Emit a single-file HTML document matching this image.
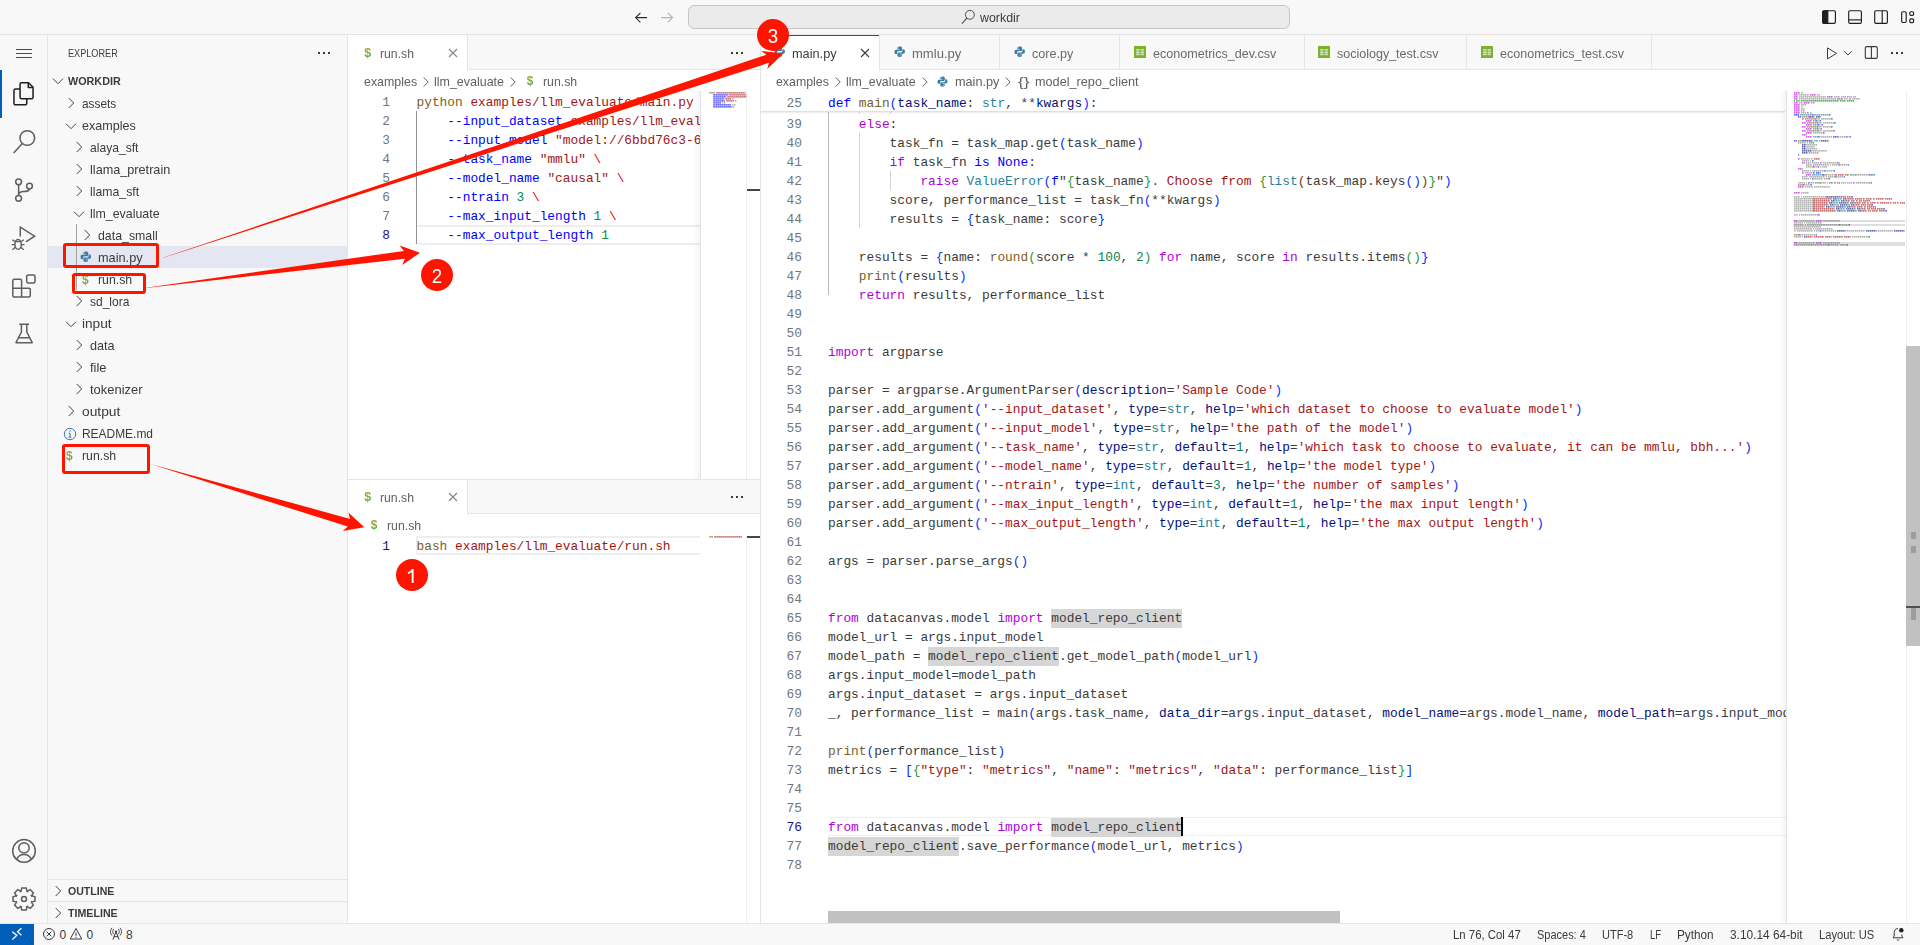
<!DOCTYPE html>
<html><head><meta charset="utf-8"><title>workdir</title>
<style>
*{box-sizing:border-box;margin:0;padding:0}
html,body{width:1920px;height:945px;overflow:hidden;background:#fff}
body{font-family:"Liberation Sans",sans-serif;font-size:13px;color:#3b3b3b;position:relative}
.abs{position:absolute}
#titlebar{left:0;top:0;width:1920px;height:35px;background:#f8f8f8;border-bottom:1px solid #e5e5e5}
#cmd{left:688px;top:5px;width:602px;height:24px;background:#ebebeb;border:1px solid #c6c6c6;border-radius:6px}
#activity{left:0;top:35px;width:48px;height:888px;background:#f8f8f8;border-right:1px solid #e5e5e5}
#sidebar{left:48px;top:35px;width:300px;height:888px;background:#f8f8f8;border-right:1px solid #e5e5e5}
#status{left:0;top:923px;width:1920px;height:22px;background:#f8f8f8;border-top:1px solid #e5e5e5;font-size:12px;color:#3b3b3b}
.row{position:absolute;left:48px;width:299px;height:22px;line-height:22px;font-size:13px;color:#3b3b3b;white-space:pre}
.row span.t{position:absolute;top:0}
.tabbar{position:absolute;background:#f8f8f8;border-bottom:1px solid #e5e5e5;height:35px}
.tab{position:absolute;top:0;height:35px;border-right:1px solid #e5e5e5;font-size:13px;line-height:35px;color:#3b3b3b;white-space:pre}
.tab.act{background:#fff;height:36px}
.bc{position:absolute;font-size:13px;color:#616161;height:22px;line-height:22px;white-space:pre}
.code{position:absolute;font-family:"Liberation Mono",monospace;font-size:12.83px;line-height:19px;height:19px;white-space:pre;color:#3b3b3b}
.ln{position:absolute;font-family:"Liberation Mono",monospace;font-size:12.83px;line-height:19px;height:19px;text-align:right;color:#6e7681;white-space:pre}
.ln.a{color:#171184}
.k{color:#af00db}.b{color:#0000ff}.f{color:#795e26}.v{color:#001080}.t{color:#267f99}.s{color:#a31515}.n{color:#098658}
.b1{color:#0431fa}.b2{color:#319331}.b3{color:#7b3814}.e{color:#ee0000}
.hl{background:#d6d6d6;padding:2.3px 0 2.2px 0}
svg{position:absolute;overflow:visible}
.sb{position:absolute;top:0;height:22px;line-height:21px;white-space:pre}

</style></head>
<body>
<div id="titlebar" class="abs"></div>
<div id="cmd" class="abs"></div>
<div class="abs" style="left:980px;top:6.6px;height:22px;line-height:22px;font-size:12px;color:#3b3b3b;white-space:pre;transform:scaleX(1.0313);transform-origin:0 50%;">workdir</div>
<svg style="left:960px;top:8px" width="16" height="18" viewBox="960 8 16 18"><circle cx="969.900" cy="14.800" r="4.450" fill="none" stroke="#4f4f4f" stroke-width="1"/><path d="M966.900 18.200L961.900 23.700" stroke="#4f4f4f" stroke-width="1.1" fill="none"/></svg>
<svg style="left:633px;top:10px" width="16" height="16" viewBox="0 0 16 16"><path d="M14 7.600H2.600M7.400 2.800L2.600 7.600L7.400 12.400" stroke="#2b2b2b" stroke-width="1.1" fill="none"/></svg>
<svg style="left:659px;top:10px" width="16" height="16" viewBox="0 0 16 16"><path d="M2 7.600H13.600M8.800 2.800L13.600 7.600L8.800 12.400" stroke="#b4b4b4" stroke-width="1.1" fill="none"/></svg>
<svg style="left:1810px;top:0" width="110" height="35" viewBox="1810 0 110 35" fill="none" stroke="#1f1f1f" stroke-width="1.15"><rect x="1822.700" y="10.700" width="12.700" height="12.700" rx="1.300"/><path d="M1822.700 12.300a1.600 1.600 0 0 1 1.600-1.600H1827.800V23.400H1824.300a1.600 1.600 0 0 1-1.600-1.600Z" fill="#1f1f1f"/><rect x="1848.700" y="10.700" width="12.700" height="12.700" rx="1.300"/><path d="M1848.700 19.900H1861.400"/><rect x="1874.700" y="10.700" width="12.700" height="12.700" rx="1.300"/><path d="M1882.200 10.700V23.400"/><rect x="1901.700" y="11.700" width="4.500" height="10.800" rx="1.200"/><rect x="1909.800" y="11.700" width="3.800" height="3.700" rx="1.100"/><rect x="1909.800" y="18.900" width="3.800" height="3.700" rx="1.100"/></svg>
<div id="activity" class="abs"></div>
<div class="abs" style="left:0;top:70px;width:2px;height:48px;background:#005fb8"></div>
<svg style="left:16px;top:45px" width="16" height="16" viewBox="0 0 16 16"><path d="M0 4.5H16M0 8.5H16M0 12.5H16" stroke="#4a4a4a" stroke-width="1"/></svg>
<svg style="left:0;top:0" width="48" height="945" viewBox="0 0 48 945" fill="none" stroke-width="1.5" stroke-linejoin="round"><g stroke="#1f1f1f"><path d="M21.500 82.750H28.600L33.050 87.200V97.250a1.500 1.500 0 0 1-1.500 1.500H21.550a1.500 1.500 0 0 1-1.500-1.500V84.250a1.500 1.500 0 0 1 1.450-1.500Z"/><path d="M28.300 83V87.500H32.900"/><path d="M20 89.050H15.450a1.500 1.500 0 0 0-1.500 1.500V103.350a1.500 1.500 0 0 0 1.500 1.500H25.250a1.500 1.500 0 0 0 1.500-1.500V98.750"/></g><g stroke="#5e5e5e"><circle cx="27.300" cy="138" r="7.350"/><path d="M22.300 143.400L13.600 153"/></g><g stroke="#5e5e5e"><circle cx="18.600" cy="181.800" r="2.900"/><circle cx="18.600" cy="198.300" r="2.900"/><circle cx="29.500" cy="186.100" r="2.900"/><path d="M18.600 184.700V195.400M29.300 189C28.800 191.600 26 191.600 23.600 191.600C21 191.600 19 192.600 18.600 195"/></g><g stroke="#5e5e5e"><path d="M20.300 236.600V227.200L34.600 236.200L25.900 241.800" stroke-linejoin="miter"/><ellipse cx="18.100" cy="244.400" rx="3.200" ry="4.900"/><path d="M15.200 241.700H21M14.900 241.600L12.300 239.700M14.800 244.600H11.700M15.100 247.600L12.400 249.800M21.300 241.600L23.900 239.700M21.400 244.600H24.500M21.100 247.600L23.800 249.800" stroke-width="1.300"/></g><g stroke="#5e5e5e"><path d="M12.800 280.800a1.500 1.500 0 0 1 1.500-1.500H20.100a1.500 1.500 0 0 1 1.500 1.500V288.200H28.800a1.500 1.500 0 0 1 1.500 1.500V295.500a1.500 1.500 0 0 1-1.500 1.500H14.300a1.500 1.500 0 0 1-1.500-1.500ZM12.800 288.200H21.600V297"/><rect x="26.700" y="275" width="8.300" height="8.100" rx="1.500"/></g><g stroke="#5e5e5e"><path d="M19.300 324.300H29M21.400 324.300V332L16 342.700H32.200L26.800 332V324.300M18.700 337.800H29.500"/></g><g stroke="#5e5e5e"><circle cx="24" cy="850.900" r="11.300"/><circle cx="24" cy="847.900" r="5.200"/><path d="M16.600 859.300C18.300 855.600 21 854.400 24 854.400S29.700 855.600 31.400 859.300"/></g><g stroke="#5e5e5e"><path d="M21.77 888.02 L26.23 888.02 L27.19 891.45 L27.08 891.40 L30.19 889.66 L33.34 892.81 L31.60 895.92 L31.55 895.81 L34.98 896.77 L34.98 901.23 L31.55 902.19 L31.60 902.08 L33.34 905.19 L30.19 908.34 L27.08 906.60 L27.19 906.55 L26.23 909.98 L21.77 909.98 L20.81 906.55 L20.92 906.60 L17.81 908.34 L14.66 905.19 L16.40 902.08 L16.45 902.19 L13.02 901.23 L13.02 896.77 L16.45 895.81 L16.40 895.92 L14.66 892.81 L17.81 889.66 L20.92 891.40 L20.81 891.45Z" stroke-linejoin="miter"/><circle cx="24" cy="899" r="2.500"/></g></svg>
<div id="sidebar" class="abs"></div>
<div class="abs" style="left:68.2px;top:42.4px;height:22px;line-height:22px;font-size:11px;color:#3b3b3b;white-space:pre;transform:scaleX(0.8309);transform-origin:0 50%;">EXPLORER</div>
<svg style="left:316px;top:51px" width="16" height="4" viewBox="0 0 16 4"><rect x="2" y="1" width="2" height="2" fill="#3b3b3b"/><rect x="7" y="1" width="2" height="2" fill="#3b3b3b"/><rect x="12" y="1" width="2" height="2" fill="#3b3b3b"/></svg>
<svg style="left:49.8px;top:73.3px" width="16" height="16" viewBox="0 0 16 16"><path d="M3 5.7L8 10.7L13 5.7" fill="none" stroke="#444" stroke-width="1"/></svg>
<div class="abs" style="left:68px;top:70.3px;height:22px;line-height:22px;font-size:11px;color:#3b3b3b;white-space:pre;font-weight:bold;transform:scaleX(0.9805);transform-origin:0 50%;">WORKDIR</div>
<div class="abs" style="left:48px;top:246px;width:299px;height:22px;background:#e4e6f1"></div>
<div class="abs" style="left:76px;top:224px;width:1px;height:66px;background:#a3a3a3"></div>
<svg style="left:63px;top:95.1px" width="16" height="16" viewBox="0 0 16 16"><path d="M5.7 3L10.7 8L5.7 13" fill="none" stroke="#444" stroke-width="1"/></svg>
<div class="abs" style="left:82.2px;top:93px;height:22px;line-height:22px;font-size:13px;color:#3b3b3b;white-space:pre;transform:scaleX(0.9101);transform-origin:0 50%;">assets</div>
<svg style="left:63px;top:117.5px" width="16" height="16" viewBox="0 0 16 16"><path d="M3 5.7L8 10.7L13 5.7" fill="none" stroke="#444" stroke-width="1"/></svg>
<div class="abs" style="left:82.2px;top:115px;height:22px;line-height:22px;font-size:13px;color:#3b3b3b;white-space:pre;transform:scaleX(0.9649);transform-origin:0 50%;">examples</div>
<svg style="left:71px;top:139.1px" width="16" height="16" viewBox="0 0 16 16"><path d="M5.7 3L10.7 8L5.7 13" fill="none" stroke="#444" stroke-width="1"/></svg>
<div class="abs" style="left:90.2px;top:137px;height:22px;line-height:22px;font-size:13px;color:#3b3b3b;white-space:pre;transform:scaleX(0.9319);transform-origin:0 50%;">alaya_sft</div>
<svg style="left:71px;top:161.1px" width="16" height="16" viewBox="0 0 16 16"><path d="M5.7 3L10.7 8L5.7 13" fill="none" stroke="#444" stroke-width="1"/></svg>
<div class="abs" style="left:90.2px;top:159px;height:22px;line-height:22px;font-size:13px;color:#3b3b3b;white-space:pre;transform:scaleX(0.9744);transform-origin:0 50%;">llama_pretrain</div>
<svg style="left:71px;top:183.1px" width="16" height="16" viewBox="0 0 16 16"><path d="M5.7 3L10.7 8L5.7 13" fill="none" stroke="#444" stroke-width="1"/></svg>
<div class="abs" style="left:90.2px;top:181px;height:22px;line-height:22px;font-size:13px;color:#3b3b3b;white-space:pre;transform:scaleX(0.9437);transform-origin:0 50%;">llama_sft</div>
<svg style="left:71px;top:205.5px" width="16" height="16" viewBox="0 0 16 16"><path d="M3 5.7L8 10.7L13 5.7" fill="none" stroke="#444" stroke-width="1"/></svg>
<div class="abs" style="left:90.2px;top:203px;height:22px;line-height:22px;font-size:13px;color:#3b3b3b;white-space:pre;transform:scaleX(0.9532);transform-origin:0 50%;">llm_evaluate</div>
<svg style="left:79px;top:227.1px" width="16" height="16" viewBox="0 0 16 16"><path d="M5.7 3L10.7 8L5.7 13" fill="none" stroke="#444" stroke-width="1"/></svg>
<div class="abs" style="left:98.2px;top:225px;height:22px;line-height:22px;font-size:13px;color:#3b3b3b;white-space:pre;transform:scaleX(0.9493);transform-origin:0 50%;">data_small</div>
<svg style="left:80.4px;top:251.2px" width="11.62" height="11.62" viewBox="0 0 14 14"><path d="M6.9 0.6C4.6 0.6 4.2 1.6 4.2 2.4V4H7.1V4.6H2.6C1.5 4.600 0.600 5.400 0.600 7.200S1.500 9.900 2.500 9.900H3.700V8.100C3.700 7 4.600 6.200 5.600 6.200H8.400C9.300 6.200 9.900 5.500 9.900 4.700V2.400C9.900 1.400 9 0.600 6.900 0.600Z" fill="#3a7ca3"/><path d="M7.1 13.4C9.400 13.400 9.800 12.400 9.800 11.600V10H6.900V9.400H11.400C12.500 9.400 13.400 8.600 13.400 6.800S12.500 4.100 11.500 4.100H10.300V5.900C10.300 7 9.400 7.800 8.400 7.800H5.600C4.700 7.800 4.100 8.500 4.100 9.300V11.600C4.100 12.600 5 13.400 7.100 13.400Z" fill="#3f82a8"/><circle cx="5.600" cy="2.300" r="0.550" fill="#fff"/><circle cx="8.400" cy="11.700" r="0.550" fill="#fff"/></svg>
<div class="abs" style="left:98.2px;top:247px;height:22px;line-height:22px;font-size:13px;color:#3b3b3b;white-space:pre;transform:scaleX(0.9795);transform-origin:0 50%;">main.py</div>
<div class="abs" style="left:82.1px;top:268.6px;font-size:12px;line-height:22px;height:22px;color:#8aa93c;font-weight:bold;background:linear-gradient(#b0a22e 28%,#55ab58 72%);-webkit-background-clip:text;background-clip:text;-webkit-text-fill-color:transparent">$</div>
<div class="abs" style="left:98.2px;top:269px;height:22px;line-height:22px;font-size:13px;color:#3b3b3b;white-space:pre;transform:scaleX(0.9463);transform-origin:0 50%;">run.sh</div>
<svg style="left:71px;top:293.1px" width="16" height="16" viewBox="0 0 16 16"><path d="M5.7 3L10.7 8L5.7 13" fill="none" stroke="#444" stroke-width="1"/></svg>
<div class="abs" style="left:90.2px;top:291px;height:22px;line-height:22px;font-size:13px;color:#3b3b3b;white-space:pre;transform:scaleX(0.9237);transform-origin:0 50%;">sd_lora</div>
<svg style="left:63px;top:315.5px" width="16" height="16" viewBox="0 0 16 16"><path d="M3 5.7L8 10.7L13 5.7" fill="none" stroke="#444" stroke-width="1"/></svg>
<div class="abs" style="left:82.2px;top:313px;height:22px;line-height:22px;font-size:13px;color:#3b3b3b;white-space:pre;transform:scaleX(1.0495);transform-origin:0 50%;">input</div>
<svg style="left:71px;top:337.1px" width="16" height="16" viewBox="0 0 16 16"><path d="M5.7 3L10.7 8L5.7 13" fill="none" stroke="#444" stroke-width="1"/></svg>
<div class="abs" style="left:90.2px;top:335px;height:22px;line-height:22px;font-size:13px;color:#3b3b3b;white-space:pre;transform:scaleX(0.9719);transform-origin:0 50%;">data</div>
<svg style="left:71px;top:359.1px" width="16" height="16" viewBox="0 0 16 16"><path d="M5.7 3L10.7 8L5.7 13" fill="none" stroke="#444" stroke-width="1"/></svg>
<div class="abs" style="left:90.2px;top:357px;height:22px;line-height:22px;font-size:13px;color:#3b3b3b;white-space:pre;transform:scaleX(0.9925);transform-origin:0 50%;">file</div>
<svg style="left:71px;top:381.1px" width="16" height="16" viewBox="0 0 16 16"><path d="M5.7 3L10.7 8L5.7 13" fill="none" stroke="#444" stroke-width="1"/></svg>
<div class="abs" style="left:90.2px;top:379px;height:22px;line-height:22px;font-size:13px;color:#3b3b3b;white-space:pre;transform:scaleX(0.9950);transform-origin:0 50%;">tokenizer</div>
<svg style="left:63px;top:403.1px" width="16" height="16" viewBox="0 0 16 16"><path d="M5.7 3L10.7 8L5.7 13" fill="none" stroke="#444" stroke-width="1"/></svg>
<div class="abs" style="left:82.2px;top:401px;height:22px;line-height:22px;font-size:13px;color:#3b3b3b;white-space:pre;transform:scaleX(1.0593);transform-origin:0 50%;">output</div>
<svg style="left:63px;top:426.5px" width="14" height="14" viewBox="0 0 14 14"><circle cx="7" cy="7" r="5.700" fill="none" stroke="#4178ac" stroke-width="1"/><path d="M7 6.200V10.200M5.800 6.200H7M5.600 10.200H8.400M7 3.600V4.800" stroke="#4178ac" stroke-width="1.1" fill="none"/></svg>
<div class="abs" style="left:82.2px;top:423px;height:22px;line-height:22px;font-size:13px;color:#3b3b3b;white-space:pre;transform:scaleX(0.9185);transform-origin:0 50%;">README.md</div>
<div class="abs" style="left:66.1px;top:444.6px;font-size:12px;line-height:22px;height:22px;color:#8aa93c;font-weight:bold;background:linear-gradient(#b0a22e 28%,#55ab58 72%);-webkit-background-clip:text;background-clip:text;-webkit-text-fill-color:transparent">$</div>
<div class="abs" style="left:82.2px;top:445px;height:22px;line-height:22px;font-size:13px;color:#3b3b3b;white-space:pre;transform:scaleX(0.9435);transform-origin:0 50%;">run.sh</div>
<div class="abs" style="left:48px;top:879px;width:299px;height:1px;background:#e5e5e5"></div>
<div class="abs" style="left:48px;top:901px;width:299px;height:1px;background:#e5e5e5"></div>
<svg style="left:50px;top:883px" width="16" height="16" viewBox="0 0 16 16"><path d="M5.7 3L10.7 8L5.7 13" fill="none" stroke="#444" stroke-width="1"/></svg>
<div class="abs" style="left:68px;top:880.4px;height:22px;line-height:22px;font-size:11px;color:#3b3b3b;white-space:pre;font-weight:bold;transform:scaleX(0.9590);transform-origin:0 50%;">OUTLINE</div>
<svg style="left:50px;top:905px" width="16" height="16" viewBox="0 0 16 16"><path d="M5.7 3L10.7 8L5.7 13" fill="none" stroke="#444" stroke-width="1"/></svg>
<div class="abs" style="left:68px;top:902.4px;height:22px;line-height:22px;font-size:11px;color:#3b3b3b;white-space:pre;font-weight:bold;transform:scaleX(0.9680);transform-origin:0 50%;">TIMELINE</div>
<div class="tabbar" style="left:348px;top:35px;width:412px"></div>
<div class="tab act" style="left:348px;top:35px;width:120px"></div>
<div class="abs" style="left:364.3px;top:42.3px;font-size:12.5px;line-height:22px;height:22px;color:#8aa93c;font-weight:bold;background:linear-gradient(#b0a22e 28%,#55ab58 72%);-webkit-background-clip:text;background-clip:text;-webkit-text-fill-color:transparent">$</div>
<div class="abs" style="left:380.3px;top:36px;height:35px;line-height:35px;font-size:13px;color:#5f5f5f;white-space:pre;transform:scaleX(0.9408);transform-origin:0 50%;">run.sh</div>
<svg style="left:445px;top:45px" width="16" height="16" viewBox="0 0 16 16"><path d="M4 4L12 12M12 4L4 12" stroke="#858585" stroke-width="1.1" fill="none"/></svg>
<svg style="left:729px;top:51px" width="16" height="4" viewBox="0 0 16 4"><rect x="2" y="1" width="2" height="2" fill="#3b3b3b"/><rect x="7" y="1" width="2" height="2" fill="#3b3b3b"/><rect x="12" y="1" width="2" height="2" fill="#3b3b3b"/></svg>
<div class="abs" style="left:364px;top:71px;height:22px;line-height:22px;font-size:13px;color:#616161;white-space:pre;transform:scaleX(0.9541);transform-origin:0 50%;">examples</div>
<svg style="left:418.4px;top:73.5px" width="16" height="16" viewBox="0 0 16 16"><path d="M5.7 3.500L10.200 8L5.700 12.500" fill="none" stroke="#616161" stroke-width="1"/></svg>
<div class="abs" style="left:434.2px;top:71px;height:22px;line-height:22px;font-size:13px;color:#616161;white-space:pre;transform:scaleX(0.9587);transform-origin:0 50%;">llm_evaluate</div>
<svg style="left:505px;top:73.5px" width="16" height="16" viewBox="0 0 16 16"><path d="M5.7 3.500L10.200 8L5.700 12.500" fill="none" stroke="#616161" stroke-width="1"/></svg>
<div class="abs" style="left:526.8px;top:70.3px;font-size:12px;line-height:22px;height:22px;color:#8aa93c;font-weight:bold;background:linear-gradient(#b0a22e 28%,#55ab58 72%);-webkit-background-clip:text;background-clip:text;-webkit-text-fill-color:transparent">$</div>
<div class="abs" style="left:542.8px;top:71px;height:22px;line-height:22px;font-size:13px;color:#616161;white-space:pre;transform:scaleX(0.9435);transform-origin:0 50%;">run.sh</div>
<div class="abs" style="left:417px;top:225px;width:283px;height:20px;border:2px solid #eeeeee;border-right:none;border-left:none"></div>
<div class="abs" style="left:416px;top:111px;width:1px;height:133px;background:#939393"></div>
<div class="abs" style="left:348px;top:91px;width:352px;height:389px;overflow:hidden">
<div class="code" style="left:68.5px;top:2px;"><span class="f">python</span> <span class="s">examples/llm_evaluate/main.py</span> <span class="e">\</span></div>
<div class="ln" style="left:2px;top:2px;width:40px">1</div>
<div class="code" style="left:68.5px;top:21px;">    <span class="b">--input_dataset</span> <span class="s">examples/llm_evaluate/data_small</span> <span class="e">\</span></div>
<div class="ln" style="left:2px;top:21px;width:40px">2</div>
<div class="code" style="left:68.5px;top:40px;">    <span class="b">--input_model</span> <span class="s">"model://6bbd76c3-6d2e-4f7a-9c1b"</span> <span class="e">\</span></div>
<div class="ln" style="left:2px;top:40px;width:40px">3</div>
<div class="code" style="left:68.5px;top:59px;">    <span class="b">--task_name</span> <span class="s">"mmlu"</span> <span class="e">\</span></div>
<div class="ln" style="left:2px;top:59px;width:40px">4</div>
<div class="code" style="left:68.5px;top:78px;">    <span class="b">--model_name</span> <span class="s">"causal"</span> <span class="e">\</span></div>
<div class="ln" style="left:2px;top:78px;width:40px">5</div>
<div class="code" style="left:68.5px;top:97px;">    <span class="b">--ntrain</span> <span class="n">3</span> <span class="e">\</span></div>
<div class="ln" style="left:2px;top:97px;width:40px">6</div>
<div class="code" style="left:68.5px;top:116px;">    <span class="b">--max_input_length</span> <span class="n">1</span> <span class="e">\</span></div>
<div class="ln" style="left:2px;top:116px;width:40px">7</div>
<div class="code" style="left:68.5px;top:135px;">    <span class="b">--max_output_length</span> <span class="n">1</span></div>
<div class="ln a" style="left:2px;top:135px;width:40px">8</div>
</div>
<div class="abs" style="left:693px;top:91px;width:7px;height:388px;background:linear-gradient(to right,rgba(0,0,0,0),rgba(0,0,0,0.045))"></div><div class="abs" style="left:700px;top:91px;width:1px;height:388px;background:#e2e2e2"></div>
<div class="abs" style="left:746px;top:91px;width:1px;height:388px;background:#ededed"></div>
<div class="abs" style="left:747px;top:189px;width:13px;height:2px;background:#454545"></div>
<svg style="left:0;top:0" width="1920" height="945" viewBox="0 0 1920 945"><path d="M709.3 92.9h6.0" stroke="#795e26" stroke-width="1.15" opacity="0.8" fill="none" stroke-dasharray="1.6 0.4"/><path d="M716.3 92.9h29.0M729.3 94.9h17.0M727.3 96.9h19.0M725.3 98.9h6.0M726.3 100.9h8.0" stroke="#a31515" stroke-width="1.15" opacity="0.8" fill="none" stroke-dasharray="1.6 0.4"/><path d="M713.3 94.9h15.0M713.3 96.9h13.0M713.3 98.9h11.0M713.3 100.9h12.0M713.3 102.9h8.0M713.3 104.9h18.0M713.3 106.9h19.0" stroke="#0000ff" stroke-width="1.15" opacity="0.8" fill="none" stroke-dasharray="1.6 0.4"/><path d="M732.3 98.9h1.0M735.3 100.9h1.0M724.3 102.9h1.0M734.3 104.9h1.0" stroke="#ee0000" stroke-width="1.15" opacity="0.8" fill="none" stroke-dasharray="1.6 0.4"/><path d="M722.3 102.9h1.0M732.3 104.9h1.0M733.3 106.9h1.0" stroke="#098658" stroke-width="1.15" opacity="0.8" fill="none" stroke-dasharray="1.6 0.4"/></svg>
<div class="abs" style="left:348px;top:479px;width:412px;height:1px;background:#e5e5e5"></div>
<div class="tabbar" style="left:348px;top:479px;width:412px;border-top:1px solid #e5e5e5"></div>
<div class="tab act" style="left:348px;top:479px;width:120px;border-top:1px solid #e5e5e5"></div>
<div class="abs" style="left:364.3px;top:486.3px;font-size:12.5px;line-height:22px;height:22px;color:#8aa93c;font-weight:bold;background:linear-gradient(#b0a22e 28%,#55ab58 72%);-webkit-background-clip:text;background-clip:text;-webkit-text-fill-color:transparent">$</div>
<div class="abs" style="left:380.3px;top:480px;height:35px;line-height:35px;font-size:13px;color:#5f5f5f;white-space:pre;transform:scaleX(0.9408);transform-origin:0 50%;">run.sh</div>
<svg style="left:445px;top:489px" width="16" height="16" viewBox="0 0 16 16"><path d="M4 4L12 12M12 4L4 12" stroke="#858585" stroke-width="1.1" fill="none"/></svg>
<svg style="left:729px;top:495px" width="16" height="4" viewBox="0 0 16 4"><rect x="2" y="1" width="2" height="2" fill="#3b3b3b"/><rect x="7" y="1" width="2" height="2" fill="#3b3b3b"/><rect x="12" y="1" width="2" height="2" fill="#3b3b3b"/></svg>
<div class="abs" style="left:370.8px;top:514.3px;font-size:12px;line-height:22px;height:22px;color:#8aa93c;font-weight:bold;background:linear-gradient(#b0a22e 28%,#55ab58 72%);-webkit-background-clip:text;background-clip:text;-webkit-text-fill-color:transparent">$</div>
<div class="abs" style="left:386.8px;top:515px;height:22px;line-height:22px;font-size:13px;color:#616161;white-space:pre;transform:scaleX(0.9435);transform-origin:0 50%;">run.sh</div>
<div class="abs" style="left:416px;top:536px;width:284px;height:19px;border:2px solid #eeeeee;border-right:none"></div>
<div class="code" style="left:416.5px;top:537px;"><span class="f">bash</span> <span class="s">examples/llm_evaluate/run.sh</span></div>
<div class="ln a" style="left:350px;top:537px;width:40px">1</div>
<div class="abs" style="left:746px;top:536px;width:1px;height:387px;background:#ededed"></div>
<div class="abs" style="left:747px;top:536px;width:13px;height:2px;background:#454545"></div>
<svg style="left:0;top:0" width="1920" height="945" viewBox="0 0 1920 945"><path d="M709.3 536.9h4.0" stroke="#795e26" stroke-width="1.15" opacity="0.8" fill="none" stroke-dasharray="1.6 0.4"/><path d="M714.3 536.9h28.0" stroke="#a31515" stroke-width="1.15" opacity="0.8" fill="none" stroke-dasharray="1.6 0.4"/></svg>
<div class="abs" style="left:760px;top:35px;width:1px;height:888px;background:#e5e5e5"></div>
<div class="tabbar" style="left:761px;top:35px;width:1159px"></div>
<div class="tab act" style="left:761px;top:35px;width:119px"></div>
<div class="abs" style="left:761px;top:35px;width:118px;height:1px;background:#005fb8"></div>
<svg style="left:774.4px;top:46.2px" width="11.48" height="11.48" viewBox="0 0 14 14"><path d="M6.9 0.6C4.6 0.6 4.2 1.6 4.2 2.4V4H7.1V4.6H2.6C1.5 4.600 0.600 5.400 0.600 7.200S1.500 9.900 2.500 9.900H3.700V8.100C3.700 7 4.600 6.200 5.600 6.200H8.400C9.300 6.200 9.900 5.500 9.900 4.700V2.400C9.900 1.400 9 0.600 6.900 0.600Z" fill="#3a7ca3"/><path d="M7.1 13.4C9.400 13.400 9.800 12.400 9.800 11.600V10H6.900V9.400H11.400C12.500 9.400 13.400 8.600 13.400 6.800S12.500 4.100 11.500 4.100H10.300V5.900C10.300 7 9.400 7.800 8.400 7.800H5.600C4.700 7.800 4.100 8.500 4.100 9.300V11.600C4.100 12.600 5 13.400 7.100 13.400Z" fill="#3f82a8"/><circle cx="5.600" cy="2.300" r="0.550" fill="#fff"/><circle cx="8.400" cy="11.700" r="0.550" fill="#fff"/></svg>
<div class="abs" style="left:792.3px;top:36px;height:35px;line-height:35px;font-size:13px;color:#3b3b3b;white-space:pre;transform:scaleX(0.9795);transform-origin:0 50%;">main.py</div>
<div class="tab" style="left:880px;top:35px;width:120px"></div>
<svg style="left:894.4px;top:46.2px" width="11.48" height="11.48" viewBox="0 0 14 14"><path d="M6.9 0.6C4.6 0.6 4.2 1.6 4.2 2.4V4H7.1V4.6H2.6C1.5 4.600 0.600 5.400 0.600 7.200S1.500 9.900 2.500 9.900H3.700V8.100C3.700 7 4.600 6.200 5.600 6.200H8.400C9.300 6.200 9.900 5.500 9.900 4.700V2.400C9.900 1.400 9 0.600 6.900 0.600Z" fill="#3a7ca3"/><path d="M7.1 13.4C9.400 13.400 9.800 12.400 9.800 11.600V10H6.900V9.400H11.400C12.500 9.400 13.400 8.600 13.400 6.800S12.500 4.100 11.500 4.100H10.300V5.900C10.300 7 9.400 7.800 8.400 7.800H5.600C4.700 7.800 4.100 8.500 4.100 9.300V11.600C4.100 12.600 5 13.400 7.100 13.400Z" fill="#3f82a8"/><circle cx="5.600" cy="2.300" r="0.550" fill="#fff"/><circle cx="8.400" cy="11.700" r="0.550" fill="#fff"/></svg>
<div class="abs" style="left:912.3px;top:36px;height:35px;line-height:35px;font-size:13px;color:#6b6b6b;white-space:pre;transform:scaleX(1.0036);transform-origin:0 50%;">mmlu.py</div>
<div class="tab" style="left:1000px;top:35px;width:120px"></div>
<svg style="left:1014.4px;top:46.2px" width="11.48" height="11.48" viewBox="0 0 14 14"><path d="M6.9 0.6C4.6 0.6 4.2 1.6 4.2 2.4V4H7.1V4.6H2.6C1.5 4.600 0.600 5.400 0.600 7.200S1.500 9.900 2.500 9.900H3.700V8.100C3.700 7 4.600 6.200 5.600 6.200H8.400C9.300 6.200 9.900 5.500 9.900 4.700V2.400C9.900 1.400 9 0.600 6.900 0.600Z" fill="#3a7ca3"/><path d="M7.1 13.4C9.400 13.400 9.800 12.400 9.800 11.600V10H6.900V9.400H11.400C12.500 9.400 13.400 8.600 13.400 6.800S12.500 4.100 11.500 4.100H10.300V5.900C10.300 7 9.400 7.800 8.400 7.800H5.600C4.700 7.800 4.100 8.500 4.100 9.300V11.600C4.100 12.600 5 13.400 7.100 13.400Z" fill="#3f82a8"/><circle cx="5.600" cy="2.300" r="0.550" fill="#fff"/><circle cx="8.400" cy="11.700" r="0.550" fill="#fff"/></svg>
<div class="abs" style="left:1032.3px;top:36px;height:35px;line-height:35px;font-size:13px;color:#6b6b6b;white-space:pre;transform:scaleX(0.9709);transform-origin:0 50%;">core.py</div>
<div class="tab" style="left:1120px;top:35px;width:185px"></div>
<svg style="left:1134px;top:46px" width="12" height="12" viewBox="0 0 12 12"><rect x="0" y="0" width="12" height="12" rx="0.5" fill="#7eb12f"/><rect x="2.2" y="3.300" width="3.300" height="5.800" fill="#a3c970"/><rect x="2.2" y="3.3" width="3.300" height="1" fill="#dcebd0"/><rect x="2.2" y="5.9" width="3.300" height="1" fill="#dcebd0"/><rect x="2.2" y="8.1" width="3.300" height="1" fill="#dcebd0"/><rect x="6.6" y="3.300" width="3.300" height="5.800" fill="#a3c970"/><rect x="6.6" y="3.3" width="3.300" height="1" fill="#dcebd0"/><rect x="6.6" y="5.9" width="3.300" height="1" fill="#dcebd0"/><rect x="6.6" y="8.1" width="3.300" height="1" fill="#dcebd0"/></svg>
<div class="abs" style="left:1152.5px;top:36px;height:35px;line-height:35px;font-size:13px;color:#6b6b6b;white-space:pre;transform:scaleX(0.9665);transform-origin:0 50%;">econometrics_dev.csv</div>
<div class="tab" style="left:1305px;top:35px;width:162px"></div>
<svg style="left:1318.3px;top:46px" width="12" height="12" viewBox="0 0 12 12"><rect x="0" y="0" width="12" height="12" rx="0.5" fill="#7eb12f"/><rect x="2.2" y="3.300" width="3.300" height="5.800" fill="#a3c970"/><rect x="2.2" y="3.3" width="3.300" height="1" fill="#dcebd0"/><rect x="2.2" y="5.9" width="3.300" height="1" fill="#dcebd0"/><rect x="2.2" y="8.1" width="3.300" height="1" fill="#dcebd0"/><rect x="6.6" y="3.300" width="3.300" height="5.800" fill="#a3c970"/><rect x="6.6" y="3.3" width="3.300" height="1" fill="#dcebd0"/><rect x="6.6" y="5.9" width="3.300" height="1" fill="#dcebd0"/><rect x="6.6" y="8.1" width="3.300" height="1" fill="#dcebd0"/></svg>
<div class="abs" style="left:1336.8px;top:36px;height:35px;line-height:35px;font-size:13px;color:#6b6b6b;white-space:pre;transform:scaleX(0.9619);transform-origin:0 50%;">sociology_test.csv</div>
<div class="tab" style="left:1467px;top:35px;width:185px"></div>
<svg style="left:1481px;top:46px" width="12" height="12" viewBox="0 0 12 12"><rect x="0" y="0" width="12" height="12" rx="0.5" fill="#7eb12f"/><rect x="2.2" y="3.300" width="3.300" height="5.800" fill="#a3c970"/><rect x="2.2" y="3.3" width="3.300" height="1" fill="#dcebd0"/><rect x="2.2" y="5.9" width="3.300" height="1" fill="#dcebd0"/><rect x="2.2" y="8.1" width="3.300" height="1" fill="#dcebd0"/><rect x="6.6" y="3.300" width="3.300" height="5.800" fill="#a3c970"/><rect x="6.6" y="3.3" width="3.300" height="1" fill="#dcebd0"/><rect x="6.6" y="5.9" width="3.300" height="1" fill="#dcebd0"/><rect x="6.6" y="8.1" width="3.300" height="1" fill="#dcebd0"/></svg>
<div class="abs" style="left:1499.5px;top:36px;height:35px;line-height:35px;font-size:13px;color:#6b6b6b;white-space:pre;transform:scaleX(0.9640);transform-origin:0 50%;">econometrics_test.csv</div>
<svg style="left:857px;top:45.4px" width="16" height="16" viewBox="0 0 16 16"><path d="M4 4L12 12M12 4L4 12" stroke="#3b3b3b" stroke-width="1.1" fill="none"/></svg>
<svg style="left:1820px;top:36px" width="100" height="34" viewBox="1820 36 100 34" fill="none" stroke="#3b3b3b" stroke-width="1"><path d="M1827.500 47.900V58.900L1836.500 53.400Z" stroke-linejoin="round"/><path d="M1844.300 51.300L1848 55L1851.700 51.300"/><rect x="1865.300" y="46.600" width="12" height="11.800" rx="1.300" stroke-width="1.1"/><path d="M1871.400 46.600V58.400" stroke-width="1.1"/></svg>
<svg style="left:1889.3px;top:51px" width="16" height="4" viewBox="0 0 16 4"><rect x="2" y="1" width="2" height="2" fill="#3b3b3b"/><rect x="7" y="1" width="2" height="2" fill="#3b3b3b"/><rect x="12" y="1" width="2" height="2" fill="#3b3b3b"/></svg>
<div class="abs" style="left:776.3px;top:71px;height:22px;line-height:22px;font-size:13px;color:#616161;white-space:pre;transform:scaleX(0.9505);transform-origin:0 50%;">examples</div>
<svg style="left:829.8px;top:73.5px" width="16" height="16" viewBox="0 0 16 16"><path d="M5.7 3.500L10.200 8L5.700 12.500" fill="none" stroke="#616161" stroke-width="1"/></svg>
<div class="abs" style="left:846.1px;top:71px;height:22px;line-height:22px;font-size:13px;color:#616161;white-space:pre;transform:scaleX(0.9546);transform-origin:0 50%;">llm_evaluate</div>
<svg style="left:917px;top:73.5px" width="16" height="16" viewBox="0 0 16 16"><path d="M5.7 3.500L10.200 8L5.700 12.500" fill="none" stroke="#616161" stroke-width="1"/></svg>
<svg style="left:937px;top:76.2px" width="11.06" height="11.06" viewBox="0 0 14 14"><path d="M6.9 0.6C4.6 0.6 4.2 1.6 4.2 2.4V4H7.1V4.6H2.6C1.5 4.600 0.600 5.400 0.600 7.200S1.500 9.900 2.500 9.900H3.700V8.100C3.700 7 4.600 6.200 5.600 6.200H8.400C9.300 6.200 9.900 5.500 9.900 4.700V2.400C9.900 1.400 9 0.600 6.900 0.600Z" fill="#3a7ca3"/><path d="M7.1 13.4C9.400 13.400 9.800 12.400 9.800 11.600V10H6.900V9.400H11.400C12.500 9.400 13.400 8.600 13.400 6.800S12.500 4.100 11.500 4.100H10.300V5.900C10.300 7 9.400 7.800 8.400 7.800H5.600C4.700 7.800 4.100 8.500 4.100 9.300V11.600C4.100 12.600 5 13.400 7.100 13.400Z" fill="#3f82a8"/><circle cx="5.600" cy="2.300" r="0.550" fill="#fff"/><circle cx="8.400" cy="11.700" r="0.550" fill="#fff"/></svg>
<div class="abs" style="left:955px;top:71px;height:22px;line-height:22px;font-size:13px;color:#616161;white-space:pre;transform:scaleX(0.9752);transform-origin:0 50%;">main.py</div>
<svg style="left:999.9px;top:73.5px" width="16" height="16" viewBox="0 0 16 16"><path d="M5.7 3.500L10.200 8L5.700 12.500" fill="none" stroke="#616161" stroke-width="1"/></svg>
<div class="abs" style="left:1018px;top:71px;height:22px;line-height:22px;font-size:13px;color:#616161;white-space:pre;transform:scaleX(1.3237);transform-origin:0 50%;">{}</div>
<div class="abs" style="left:1035.4px;top:71px;height:22px;line-height:22px;font-size:13px;color:#616161;white-space:pre;transform:scaleX(0.9748);transform-origin:0 50%;">model_repo_client</div>
<div class="abs" style="left:761px;top:91px;width:1025px;height:832px;overflow:hidden">
<div class="abs" style="left:67px;top:726px;width:960px;height:19px;border-top:1px solid #eeeeee;border-bottom:1px solid #eeeeee"></div>
<div class="ln" style="left:1px;top:3px;width:40px">25</div>
<div class="code" style="left:67px;top:3px;"><span class="b">def</span> <span class="f">main</span><span class="b1">(</span><span class="v">task_name</span>: <span class="t">str</span>, **<span class="v">kwargs</span><span class="b1">)</span>:</div>
<div class="abs" style="left:0;top:20px;width:1024px;height:1px;background:#e0e0e0"></div><div class="abs" style="left:0;top:21px;width:1024px;height:2px;background:linear-gradient(#ececec,#fff)"></div>
<div class="abs" style="left:67px;top:21px;width:1px;height:183px;background:#b8b8b8"></div>
<div class="abs" style="left:98px;top:21px;width:1px;height:2px;background:#d3d3d3"></div>
<div class="abs" style="left:129px;top:21px;width:1px;height:2px;background:#d3d3d3"></div>
<div class="abs" style="left:97.8px;top:42px;width:1px;height:95px;background:#d3d3d3"></div>
<div class="abs" style="left:128.6px;top:80px;width:1px;height:19px;background:#d3d3d3"></div>
<div class="ln" style="left:1px;top:24px;width:40px">39</div>
<div class="code" style="left:67px;top:24px;">    <span class="k">else</span>:</div>
<div class="ln" style="left:1px;top:43px;width:40px">40</div>
<div class="code" style="left:67px;top:43px;">        task_fn = task_map.get<span class="b1">(</span>task_name<span class="b1">)</span></div>
<div class="ln" style="left:1px;top:62px;width:40px">41</div>
<div class="code" style="left:67px;top:62px;">        <span class="k">if</span> task_fn <span class="b">is</span> <span class="b">None</span>:</div>
<div class="ln" style="left:1px;top:81px;width:40px">42</div>
<div class="code" style="left:67px;top:81px;">            <span class="k">raise</span> <span class="t">ValueError</span><span class="b1">(</span><span class="b">f</span>"<span class="b2">{</span>task_name<span class="b2">}</span><span class="s">. Choose from </span><span class="b2">{</span><span class="t">list</span><span class="b3">(</span>task_map.keys<span class="b1">()</span><span class="b3">)</span><span class="b2">}</span>"<span class="b1">)</span></div>
<div class="ln" style="left:1px;top:100px;width:40px">43</div>
<div class="code" style="left:67px;top:100px;">        score, performance_list = task_fn<span class="b1">(</span>**kwargs<span class="b1">)</span></div>
<div class="ln" style="left:1px;top:119px;width:40px">44</div>
<div class="code" style="left:67px;top:119px;">        results = <span class="b1">{</span>task_name: score<span class="b1">}</span></div>
<div class="ln" style="left:1px;top:138px;width:40px">45</div>
<div class="ln" style="left:1px;top:157px;width:40px">46</div>
<div class="code" style="left:67px;top:157px;">    results = <span class="b1">{</span>name: <span class="f">round</span><span class="b2">(</span>score * <span class="n">100</span>, <span class="n">2</span><span class="b2">)</span> <span class="k">for</span> name, score <span class="k">in</span> results.items<span class="b2">()</span><span class="b1">}</span></div>
<div class="ln" style="left:1px;top:176px;width:40px">47</div>
<div class="code" style="left:67px;top:176px;">    <span class="f">print</span><span class="b1">(</span>results<span class="b1">)</span></div>
<div class="ln" style="left:1px;top:195px;width:40px">48</div>
<div class="code" style="left:67px;top:195px;">    <span class="k">return</span> results, performance_list</div>
<div class="ln" style="left:1px;top:214px;width:40px">49</div>
<div class="ln" style="left:1px;top:233px;width:40px">50</div>
<div class="ln" style="left:1px;top:252px;width:40px">51</div>
<div class="code" style="left:67px;top:252px;"><span class="k">import</span> argparse</div>
<div class="ln" style="left:1px;top:271px;width:40px">52</div>
<div class="ln" style="left:1px;top:290px;width:40px">53</div>
<div class="code" style="left:67px;top:290px;">parser = argparse.ArgumentParser<span class="b1">(</span><span class="v">description</span>=<span class="s">'Sample Code'</span><span class="b1">)</span></div>
<div class="ln" style="left:1px;top:309px;width:40px">54</div>
<div class="code" style="left:67px;top:309px;">parser.add_argument<span class="b1">(</span><span class="s">'--input_dataset'</span>, <span class="v">type</span>=<span class="t">str</span>, <span class="v">help</span>=<span class="s">'which dataset to choose to evaluate model'</span><span class="b1">)</span></div>
<div class="ln" style="left:1px;top:328px;width:40px">55</div>
<div class="code" style="left:67px;top:328px;">parser.add_argument<span class="b1">(</span><span class="s">'--input_model'</span>, <span class="v">type</span>=<span class="t">str</span>, <span class="v">help</span>=<span class="s">'the path of the model'</span><span class="b1">)</span></div>
<div class="ln" style="left:1px;top:347px;width:40px">56</div>
<div class="code" style="left:67px;top:347px;">parser.add_argument<span class="b1">(</span><span class="s">'--task_name'</span>, <span class="v">type</span>=<span class="t">str</span>, <span class="v">default</span>=<span class="n">1</span>, <span class="v">help</span>=<span class="s">'which task to choose to evaluate, it can be mmlu, bbh...'</span><span class="b1">)</span></div>
<div class="ln" style="left:1px;top:366px;width:40px">57</div>
<div class="code" style="left:67px;top:366px;">parser.add_argument<span class="b1">(</span><span class="s">'--model_name'</span>, <span class="v">type</span>=<span class="t">str</span>, <span class="v">default</span>=<span class="n">1</span>, <span class="v">help</span>=<span class="s">'the model type'</span><span class="b1">)</span></div>
<div class="ln" style="left:1px;top:385px;width:40px">58</div>
<div class="code" style="left:67px;top:385px;">parser.add_argument<span class="b1">(</span><span class="s">'--ntrain'</span>, <span class="v">type</span>=<span class="t">int</span>, <span class="v">default</span>=<span class="n">3</span>, <span class="v">help</span>=<span class="s">'the number of samples'</span><span class="b1">)</span></div>
<div class="ln" style="left:1px;top:404px;width:40px">59</div>
<div class="code" style="left:67px;top:404px;">parser.add_argument<span class="b1">(</span><span class="s">'--max_input_length'</span>, <span class="v">type</span>=<span class="t">int</span>, <span class="v">default</span>=<span class="n">1</span>, <span class="v">help</span>=<span class="s">'the max input length'</span><span class="b1">)</span></div>
<div class="ln" style="left:1px;top:423px;width:40px">60</div>
<div class="code" style="left:67px;top:423px;">parser.add_argument<span class="b1">(</span><span class="s">'--max_output_length'</span>, <span class="v">type</span>=<span class="t">int</span>, <span class="v">default</span>=<span class="n">1</span>, <span class="v">help</span>=<span class="s">'the max output length'</span><span class="b1">)</span></div>
<div class="ln" style="left:1px;top:442px;width:40px">61</div>
<div class="ln" style="left:1px;top:461px;width:40px">62</div>
<div class="code" style="left:67px;top:461px;">args = parser.parse_args<span class="b1">()</span></div>
<div class="ln" style="left:1px;top:480px;width:40px">63</div>
<div class="ln" style="left:1px;top:499px;width:40px">64</div>
<div class="ln" style="left:1px;top:518px;width:40px">65</div>
<div class="code" style="left:67px;top:518px;"><span class="k">from</span> datacanvas.model <span class="k">import</span> <span class="hl">model_repo_client</span></div>
<div class="ln" style="left:1px;top:537px;width:40px">66</div>
<div class="code" style="left:67px;top:537px;">model_url = args.input_model</div>
<div class="ln" style="left:1px;top:556px;width:40px">67</div>
<div class="code" style="left:67px;top:556px;">model_path = <span class="hl">model_repo_client</span>.get_model_path<span class="b1">(</span>model_url<span class="b1">)</span></div>
<div class="ln" style="left:1px;top:575px;width:40px">68</div>
<div class="code" style="left:67px;top:575px;">args.input_model=model_path</div>
<div class="ln" style="left:1px;top:594px;width:40px">69</div>
<div class="code" style="left:67px;top:594px;">args.input_dataset = args.input_dataset</div>
<div class="ln" style="left:1px;top:613px;width:40px">70</div>
<div class="code" style="left:67px;top:613px;">_, performance_list = main<span class="b1">(</span>args.task_name, <span class="v">data_dir</span>=args.input_dataset, <span class="v">model_name</span>=args.model_name, <span class="v">model_path</span>=args.input_model, <span class="v">ntrain</span>=args.ntrain<span class="b1">)</span></div>
<div class="ln" style="left:1px;top:632px;width:40px">71</div>
<div class="ln" style="left:1px;top:651px;width:40px">72</div>
<div class="code" style="left:67px;top:651px;"><span class="f">print</span><span class="b1">(</span>performance_list<span class="b1">)</span></div>
<div class="ln" style="left:1px;top:670px;width:40px">73</div>
<div class="code" style="left:67px;top:670px;">metrics = <span class="b1">[</span><span class="b2">{</span><span class="s">"type"</span>: <span class="s">"metrics"</span>, <span class="s">"name"</span>: <span class="s">"metrics"</span>, <span class="s">"data"</span>: performance_list<span class="b2">}</span><span class="b1">]</span></div>
<div class="ln" style="left:1px;top:689px;width:40px">74</div>
<div class="ln" style="left:1px;top:708px;width:40px">75</div>
<div class="ln a" style="left:1px;top:727px;width:40px">76</div>
<div class="code" style="left:67px;top:727px;"><span class="k">from</span> datacanvas.model <span class="k">import</span> <span class="hl">model_repo_client</span></div>
<div class="ln" style="left:1px;top:746px;width:40px">77</div>
<div class="code" style="left:67px;top:746px;"><span class="hl">model_repo_client</span>.save_performance<span class="b1">(</span>model_url, metrics<span class="b1">)</span></div>
<div class="ln" style="left:1px;top:765px;width:40px">78</div>
<div class="abs" style="left:420.4px;top:726px;width:2px;height:19px;background:#000"></div>
<div class="abs" style="left:67px;top:820px;width:512px;height:12px;background:#c1c1c1"></div>
</div>
<div class="abs" style="left:1779px;top:91px;width:7px;height:832px;background:linear-gradient(to right,rgba(0,0,0,0),rgba(0,0,0,0.045))"></div>
<div class="abs" style="left:1786px;top:91px;width:1px;height:832px;background:#e4e4e4"></div>
<div class="abs" style="left:1906px;top:91px;width:1px;height:832px;background:#ededed"></div>
<div class="abs" style="left:1906px;top:346px;width:14px;height:300px;background:#c1c1c1"></div>
<div class="abs" style="left:1911px;top:532px;width:5px;height:7px;background:#9d9d9d"></div>
<div class="abs" style="left:1911px;top:546px;width:5px;height:7px;background:#9d9d9d"></div>
<div class="abs" style="left:1906px;top:606px;width:14px;height:2px;background:#505050"></div>
<div class="abs" style="left:1911px;top:608px;width:5px;height:12px;background:#9d9d9d"></div>
<div class="abs" style="left:1793px;top:220px;width:112px;height:2px;background:#dedede"></div>
<div class="abs" style="left:1793px;top:224px;width:112px;height:2px;background:#dedede"></div>
<div class="abs" style="left:1793px;top:242px;width:112px;height:2px;background:#dedede"></div>
<div class="abs" style="left:1793px;top:244px;width:112px;height:2px;background:#dedede"></div>
<div class="abs" style="left:1786px;top:92px;width:119px;height:160px;overflow:hidden"><svg style="left:0;top:0" width="119" height="160" viewBox="0 0 119 160"><path d="M8.0 0.9h6.0M8.0 2.9h4.0M24.0 2.9h6.0M8.0 4.9h4.0M41.0 4.9h6.0M8.0 6.9h4.0M51.0 6.9h6.0M63.0 6.9h2.0M8.0 10.9h4.0M18.0 10.9h6.0M8.0 12.9h6.0M8.0 14.9h6.0M8.0 16.9h6.0M8.0 18.9h6.0M8.0 20.9h6.0M21.0 20.9h2.0M16.0 26.9h2.0M20.0 28.9h6.0M16.0 30.9h4.0M20.0 32.9h6.0M16.0 34.9h4.0M20.0 36.9h6.0M16.0 38.9h4.0M20.0 40.9h6.0M16.0 42.9h4.0M20.0 44.9h6.0M12.0 66.9h2.0M16.0 70.9h3.0M34.0 70.9h2.0M12.0 76.9h4.0M16.0 80.9h2.0M20.0 82.9h5.0M51.0 90.9h3.0M67.0 90.9h2.0M12.0 94.9h6.0M8.0 100.9h6.0M8.0 128.9h4.0M30.0 128.9h6.0M8.0 150.9h4.0M30.0 150.9h6.0" stroke="#af00db" stroke-width="1.15" opacity="0.8" fill="none" stroke-dasharray="1.6 0.4"/><path d="M15.0 0.9h2.0M13.0 2.9h10.0M31.0 2.9h3.0M13.0 4.9h27.0M48.0 4.9h6.0M55.0 4.9h5.0M61.0 4.9h5.0M67.0 4.9h3.0M13.0 6.9h37.0M58.0 6.9h4.0M66.0 6.9h8.0M13.0 10.9h4.0M25.0 10.9h4.0M15.0 12.9h5.0M15.0 14.9h2.0M15.0 16.9h4.0M15.0 18.9h4.0M15.0 20.9h5.0M24.0 20.9h2.0M44.0 22.9h1.0M28.0 24.9h1.0M34.0 24.9h1.0M30.0 26.9h4.0M35.0 26.9h10.0M46.0 26.9h1.0M31.0 28.9h3.0M32.0 30.9h4.0M37.0 30.9h11.0M49.0 30.9h1.0M33.0 32.9h3.0M32.0 34.9h4.0M37.0 34.9h8.0M46.0 34.9h1.0M32.0 36.9h3.0M32.0 38.9h4.0M37.0 38.9h10.0M48.0 38.9h1.0M27.0 40.9h10.0M20.0 42.9h1.0M33.0 44.9h13.0M52.0 44.9h8.0M61.0 44.9h3.0M26.0 48.9h1.0M31.0 48.9h1.0M33.0 48.9h2.0M42.0 48.9h1.0M12.0 50.9h8.0M21.0 50.9h1.0M20.0 52.9h11.0M19.0 54.9h10.0M20.0 56.9h11.0M25.0 58.9h16.0M21.0 60.9h12.0M15.0 66.9h9.0M25.0 66.9h2.0M33.0 66.9h1.0M16.0 68.9h7.0M24.0 68.9h1.0M20.0 70.9h5.0M26.0 70.9h7.0M37.0 70.9h14.0M53.0 70.9h1.0M20.0 72.9h6.0M27.0 72.9h16.0M44.0 72.9h1.0M46.0 72.9h7.0M54.0 72.9h8.0M20.0 74.9h7.0M28.0 74.9h4.0M34.0 74.9h1.0M36.0 74.9h5.0M16.0 76.9h1.0M16.0 78.9h7.0M24.0 78.9h1.0M26.0 78.9h12.0M39.0 78.9h9.0M19.0 80.9h7.0M34.0 80.9h1.0M38.0 82.9h1.0M40.0 82.9h9.0M70.0 82.9h13.0M87.0 82.9h1.0M16.0 84.9h6.0M23.0 84.9h16.0M40.0 84.9h1.0M42.0 84.9h7.0M50.0 84.9h8.0M16.0 86.9h7.0M24.0 86.9h1.0M27.0 86.9h10.0M38.0 86.9h5.0M12.0 90.9h7.0M20.0 90.9h1.0M23.0 90.9h5.0M35.0 90.9h5.0M41.0 90.9h1.0M46.0 90.9h1.0M55.0 90.9h5.0M61.0 90.9h5.0M70.0 90.9h13.0M18.0 92.9h7.0M19.0 94.9h8.0M28.0 94.9h16.0M15.0 100.9h8.0M8.0 104.9h6.0M15.0 104.9h1.0M17.0 104.9h23.0M52.0 104.9h1.0M8.0 106.9h19.0M45.0 106.9h1.0M51.0 106.9h1.0M55.0 106.9h1.0M61.0 106.9h1.0M8.0 108.9h19.0M43.0 108.9h1.0M49.0 108.9h1.0M53.0 108.9h1.0M59.0 108.9h1.0M8.0 110.9h19.0M41.0 110.9h1.0M47.0 110.9h1.0M51.0 110.9h1.0M60.0 110.9h1.0M62.0 110.9h1.0M68.0 110.9h1.0M8.0 112.9h19.0M42.0 112.9h1.0M48.0 112.9h1.0M52.0 112.9h1.0M61.0 112.9h1.0M63.0 112.9h1.0M69.0 112.9h1.0M8.0 114.9h19.0M38.0 114.9h1.0M44.0 114.9h1.0M48.0 114.9h1.0M57.0 114.9h1.0M59.0 114.9h1.0M65.0 114.9h1.0M8.0 116.9h19.0M48.0 116.9h1.0M54.0 116.9h1.0M58.0 116.9h1.0M67.0 116.9h1.0M69.0 116.9h1.0M75.0 116.9h1.0M8.0 118.9h19.0M49.0 118.9h1.0M55.0 118.9h1.0M59.0 118.9h1.0M68.0 118.9h1.0M70.0 118.9h1.0M76.0 118.9h1.0M8.0 122.9h4.0M13.0 122.9h1.0M15.0 122.9h17.0M13.0 128.9h16.0M8.0 130.9h9.0M18.0 130.9h1.0M20.0 130.9h16.0M8.0 132.9h10.0M19.0 132.9h1.0M38.0 132.9h15.0M54.0 132.9h9.0M8.0 134.9h27.0M8.0 136.9h18.0M27.0 136.9h1.0M29.0 136.9h18.0M8.0 138.9h2.0M11.0 138.9h16.0M28.0 138.9h1.0M30.0 138.9h4.0M35.0 138.9h15.0M59.0 138.9h20.0M90.0 138.9h17.0M118.0 138.9h1.0M14.0 142.9h16.0M8.0 144.9h7.0M16.0 144.9h1.0M26.0 144.9h1.0M37.0 144.9h1.0M45.0 144.9h1.0M56.0 144.9h1.0M64.0 144.9h1.0M66.0 144.9h16.0M13.0 150.9h16.0M25.0 152.9h17.0M43.0 152.9h10.0M54.0 152.9h7.0" stroke="#3b3b3b" stroke-width="1.15" opacity="0.5" fill="none" stroke-dasharray="1.6 0.4"/><path d="M8.0 8.9h1.0M10.0 8.9h4.0M15.0 8.9h38.0M54.0 8.9h6.0M61.0 8.9h7.0" stroke="#008000" stroke-width="1.15" opacity="0.8" fill="none" stroke-dasharray="1.6 0.4"/><path d="M8.0 22.9h5.0M12.0 24.9h3.0M47.0 44.9h4.0M8.0 48.9h3.0M27.0 80.9h2.0M30.0 80.9h4.0M37.0 82.9h1.0" stroke="#0000ff" stroke-width="1.15" opacity="0.8" fill="none" stroke-dasharray="1.6 0.4"/><path d="M14.0 22.9h12.0M27.0 22.9h16.0M27.0 28.9h3.0M27.0 32.9h5.0M27.0 36.9h4.0M27.0 44.9h5.0M28.0 48.9h3.0M23.0 50.9h4.0M26.0 82.9h10.0M65.0 82.9h4.0M52.0 106.9h3.0M50.0 108.9h3.0M48.0 110.9h3.0M49.0 112.9h3.0M45.0 114.9h3.0M55.0 116.9h3.0M56.0 118.9h3.0" stroke="#267f99" stroke-width="1.15" opacity="0.8" fill="none" stroke-dasharray="1.6 0.4"/><path d="M26.0 22.9h1.0M43.0 22.9h1.0M23.0 24.9h1.0M33.0 24.9h1.0M29.0 26.9h1.0M45.0 26.9h1.0M30.0 28.9h1.0M34.0 28.9h1.0M31.0 30.9h1.0M48.0 30.9h1.0M32.0 32.9h1.0M36.0 32.9h1.0M31.0 34.9h1.0M45.0 34.9h1.0M31.0 36.9h1.0M35.0 36.9h1.0M31.0 38.9h1.0M47.0 38.9h1.0M37.0 40.9h2.0M32.0 44.9h1.0M51.0 44.9h1.0M60.0 44.9h1.0M64.0 44.9h1.0M16.0 48.9h1.0M41.0 48.9h1.0M27.0 50.9h1.0M12.0 62.9h1.0M26.0 68.9h2.0M51.0 70.9h2.0M53.0 72.9h1.0M62.0 72.9h1.0M27.0 74.9h1.0M32.0 74.9h1.0M38.0 78.9h1.0M48.0 78.9h1.0M36.0 82.9h1.0M83.0 82.9h2.0M88.0 82.9h1.0M49.0 84.9h1.0M58.0 84.9h1.0M26.0 86.9h1.0M43.0 86.9h1.0M22.0 90.9h1.0M85.0 90.9h1.0M17.0 92.9h1.0M25.0 92.9h1.0M40.0 104.9h1.0M66.0 104.9h1.0M27.0 106.9h1.0M105.0 106.9h1.0M27.0 108.9h1.0M83.0 108.9h1.0M27.0 110.9h1.0M27.0 112.9h1.0M86.0 112.9h1.0M27.0 114.9h1.0M89.0 114.9h1.0M27.0 116.9h1.0M98.0 116.9h1.0M27.0 118.9h1.0M100.0 118.9h1.0M32.0 122.9h2.0M53.0 132.9h1.0M63.0 132.9h1.0M34.0 138.9h1.0M13.0 142.9h1.0M30.0 142.9h1.0M18.0 144.9h1.0M83.0 144.9h1.0M42.0 152.9h1.0M61.0 152.9h1.0" stroke="#0431fa" stroke-width="1.15" opacity="0.8" fill="none" stroke-dasharray="1.6 0.4"/><path d="M16.0 24.9h7.0M19.0 26.9h10.0M21.0 30.9h10.0M21.0 34.9h10.0M21.0 38.9h10.0M12.0 48.9h4.0M29.0 90.9h5.0M12.0 92.9h5.0M8.0 142.9h5.0" stroke="#795e26" stroke-width="1.15" opacity="0.8" fill="none" stroke-dasharray="1.6 0.4"/><path d="M24.0 24.9h4.0M30.0 24.9h3.0M17.0 48.9h9.0M35.0 48.9h6.0M16.0 52.9h4.0M16.0 54.9h3.0M16.0 56.9h4.0M16.0 58.9h9.0M16.0 60.9h5.0M41.0 104.9h11.0M47.0 106.9h4.0M57.0 106.9h4.0M45.0 108.9h4.0M55.0 108.9h4.0M43.0 110.9h4.0M53.0 110.9h7.0M64.0 110.9h4.0M44.0 112.9h4.0M54.0 112.9h7.0M65.0 112.9h4.0M40.0 114.9h4.0M50.0 114.9h7.0M61.0 114.9h4.0M50.0 116.9h4.0M60.0 116.9h7.0M71.0 116.9h4.0M51.0 118.9h4.0M61.0 118.9h7.0M72.0 118.9h4.0M51.0 138.9h8.0M80.0 138.9h10.0M108.0 138.9h10.0" stroke="#001080" stroke-width="1.15" opacity="0.8" fill="none" stroke-dasharray="1.6 0.4"/><path d="M28.0 66.9h5.0M50.0 82.9h1.0M52.0 82.9h6.0M59.0 82.9h4.0M53.0 104.9h7.0M61.0 104.9h5.0M28.0 106.9h17.0M62.0 106.9h6.0M69.0 106.9h7.0M77.0 106.9h2.0M80.0 106.9h6.0M87.0 106.9h2.0M90.0 106.9h8.0M99.0 106.9h6.0M28.0 108.9h15.0M60.0 108.9h4.0M65.0 108.9h4.0M70.0 108.9h2.0M73.0 108.9h3.0M77.0 108.9h6.0M28.0 110.9h13.0M69.0 110.9h6.0M76.0 110.9h4.0M81.0 110.9h2.0M84.0 110.9h6.0M91.0 110.9h2.0M94.0 110.9h9.0M104.0 110.9h2.0M107.0 110.9h3.0M111.0 110.9h2.0M114.0 110.9h5.0M28.0 112.9h14.0M70.0 112.9h4.0M75.0 112.9h5.0M81.0 112.9h5.0M28.0 114.9h10.0M66.0 114.9h4.0M71.0 114.9h6.0M78.0 114.9h2.0M81.0 114.9h8.0M28.0 116.9h20.0M76.0 116.9h4.0M81.0 116.9h3.0M85.0 116.9h5.0M91.0 116.9h7.0M28.0 118.9h21.0M77.0 118.9h4.0M82.0 118.9h3.0M86.0 118.9h6.0M93.0 118.9h7.0M20.0 144.9h6.0M28.0 144.9h9.0M39.0 144.9h6.0M47.0 144.9h9.0M58.0 144.9h6.0" stroke="#a31515" stroke-width="1.15" opacity="0.8" fill="none" stroke-dasharray="1.6 0.4"/><path d="M39.0 82.9h1.0M49.0 82.9h1.0M64.0 82.9h1.0M86.0 82.9h1.0M34.0 90.9h1.0M49.0 90.9h1.0M83.0 90.9h2.0M19.0 144.9h1.0M82.0 144.9h1.0" stroke="#319331" stroke-width="1.15" opacity="0.8" fill="none" stroke-dasharray="1.6 0.4"/><path d="M69.0 82.9h1.0M85.0 82.9h1.0" stroke="#7b3814" stroke-width="1.15" opacity="0.8" fill="none" stroke-dasharray="1.6 0.4"/><path d="M43.0 90.9h3.0M48.0 90.9h1.0M61.0 110.9h1.0M62.0 112.9h1.0M58.0 114.9h1.0M68.0 116.9h1.0M69.0 118.9h1.0" stroke="#098658" stroke-width="1.15" opacity="0.8" fill="none" stroke-dasharray="1.6 0.4"/><path d="M37.0 128.9h17.0M21.0 132.9h17.0M37.0 150.9h17.0M8.0 152.9h17.0" stroke="#3b3b3b" stroke-width="1.15" opacity="0.5" fill="none" stroke-dasharray="1.6 0.4"/></svg></div>
<div id="status" class="abs"></div>
<div class="abs" style="left:0;top:924px;width:34px;height:21px;background:#005fb8"></div>
<svg style="left:0;top:924px" width="34" height="21" viewBox="0 924 34 21"><path d="M12.300 931.700L16.800 935.400L12.400 939.500M21.400 928.200L17.500 931.700L21.400 935.200" fill="none" stroke="#fff" stroke-width="1.300"/></svg>
<svg style="left:42px;top:927px" width="14" height="14" viewBox="0 0 14 14"><circle cx="7" cy="7" r="5.500" fill="none" stroke="#3b3b3b" stroke-width="1"/><path d="M4.700 4.700L9.300 9.300M9.300 4.700L4.700 9.300" stroke="#3b3b3b" stroke-width="1"/></svg>
<div class="abs" style="left:59.5px;top:924.7px;height:21px;line-height:21px;font-size:12px;color:#3b3b3b;white-space:pre;">0</div>
<svg style="left:69px;top:927px" width="14" height="14" viewBox="0 0 14 14"><path d="M7 1.500L12.800 12H1.200Z" fill="none" stroke="#3b3b3b" stroke-width="1" stroke-linejoin="round"/><path d="M7 5.500V8.800M7 9.800V10.800" stroke="#3b3b3b" stroke-width="1"/></svg>
<div class="abs" style="left:86.6px;top:924.7px;height:21px;line-height:21px;font-size:12px;color:#3b3b3b;white-space:pre;">0</div>
<svg style="left:108px;top:924px" width="18" height="21" viewBox="108 924 18 21" fill="none" stroke="#3b3b3b"><path d="M116 931.800L112.900 939.600M116 931.800L119.100 939.600M113.900 936.700H118.100" stroke-width="1"/><circle cx="116" cy="931.600" r="1.100" fill="#3b3b3b" stroke="none"/><path d="M113.700 928.900C112.500 930.500 112.500 932.900 113.700 934.400M118.300 928.900C119.500 930.500 119.500 932.900 118.300 934.400M111.900 927.900C110 930.300 110 933.200 111.900 935.500M120.100 927.900C122 930.300 122 933.200 120.100 935.500" stroke-width="0.9"/></svg>
<div class="abs" style="left:126px;top:924.7px;height:21px;line-height:21px;font-size:12px;color:#3b3b3b;white-space:pre;">8</div>
<div class="abs" style="left:1453.2px;top:924.7px;height:21px;line-height:21px;font-size:12px;color:#3b3b3b;white-space:pre;transform:scaleX(0.9487);transform-origin:0 50%;">Ln 76, Col 47</div>
<div class="abs" style="left:1537.2px;top:924.7px;height:21px;line-height:21px;font-size:12px;color:#3b3b3b;white-space:pre;transform:scaleX(0.9148);transform-origin:0 50%;">Spaces: 4</div>
<div class="abs" style="left:1602.2px;top:924.7px;height:21px;line-height:21px;font-size:12px;color:#3b3b3b;white-space:pre;transform:scaleX(0.9176);transform-origin:0 50%;">UTF-8</div>
<div class="abs" style="left:1650.2px;top:924.7px;height:21px;line-height:21px;font-size:12px;color:#3b3b3b;white-space:pre;transform:scaleX(0.8000);transform-origin:0 50%;">LF</div>
<div class="abs" style="left:1677.2px;top:924.7px;height:21px;line-height:21px;font-size:12px;color:#3b3b3b;white-space:pre;transform:scaleX(0.9801);transform-origin:0 50%;">Python</div>
<div class="abs" style="left:1730.2px;top:924.7px;height:21px;line-height:21px;font-size:12px;color:#3b3b3b;white-space:pre;transform:scaleX(0.9896);transform-origin:0 50%;">3.10.14 64-bit</div>
<div class="abs" style="left:1819px;top:924.7px;height:21px;line-height:21px;font-size:12px;color:#3b3b3b;white-space:pre;transform:scaleX(0.9302);transform-origin:0 50%;">Layout: US</div>
<svg style="left:1890px;top:926px" width="16" height="16" viewBox="0 0 16 16"><path d="M8 2.500C5.500 2.500 4.200 4.200 4.200 6.500V10L3 11.800H13L11.800 10V8.500M6.800 13.500C7.200 14.300 8.800 14.300 9.200 13.500" fill="none" stroke="#3b3b3b" stroke-width="1"/><circle cx="11.300" cy="4.200" r="2.200" fill="#1f1f1f"/></svg>
<div class="abs" style="left:63.4px;top:243.2px;width:95.4px;height:25.1px;border:3.4px solid #ff1400;border-radius:3px"></div>
<div class="abs" style="left:71.6px;top:272.5px;width:74.1px;height:21.1px;border:3.4px solid #ff1400;border-radius:3px"></div>
<div class="abs" style="left:61.8px;top:443.5px;width:88.7px;height:30.5px;border:3.4px solid #ff1400;border-radius:3px"></div>
<svg style="left:0;top:0" width="1920" height="945" viewBox="0 0 1920 945"><polygon points="163.3,257.8 769.0,62.8 767.2,69.0 783.5,53.6 761.2,50.9 766.4,54.8 163.3,257.6" fill="#ff1400"/><polygon points="146.0,287.9 404.9,258.7 402.2,264.9 420.0,252.8 399.7,245.6 403.9,250.9 146.0,287.7" fill="#ff1400"/><polygon points="150.5,464.1 347.8,526.6 342.8,531.1 364.3,527.3 348.4,512.5 350.1,518.9 150.5,463.9" fill="#ff1400"/></svg>
<div class="abs" style="left:757px;top:18.8px;width:32px;height:32px;border-radius:50%;background:#ff1400"></div>
<div class="abs" style="left:753px;top:24px;width:40px;height:24px;color:#fff;font-size:20px;line-height:24px;text-align:center;transform:scaleX(0.93)">3</div>
<div class="abs" style="left:421px;top:258.8px;width:32px;height:32px;border-radius:50%;background:#ff1400"></div>
<div class="abs" style="left:417px;top:264px;width:40px;height:24px;color:#fff;font-size:20px;line-height:24px;text-align:center;transform:scaleX(0.93)">2</div>
<div class="abs" style="left:396px;top:559px;width:32px;height:32px;border-radius:50%;background:#ff1400"></div>
<div class="abs" style="left:392px;top:564.2px;width:40px;height:24px;color:#fff;font-size:20px;line-height:24px;text-align:center;transform:scaleX(0.93)"></div>
<svg style="left:0;top:0" width="1920" height="945" viewBox="0 0 1920 945"><polygon points="411.9,569.1 413.6,569.1 413.6,583.1 411.7,583.1 411.7,571.9 408.3,574.2 407.6,572.6 410.6,570.8" fill="#fff"/></svg>
</body></html>
